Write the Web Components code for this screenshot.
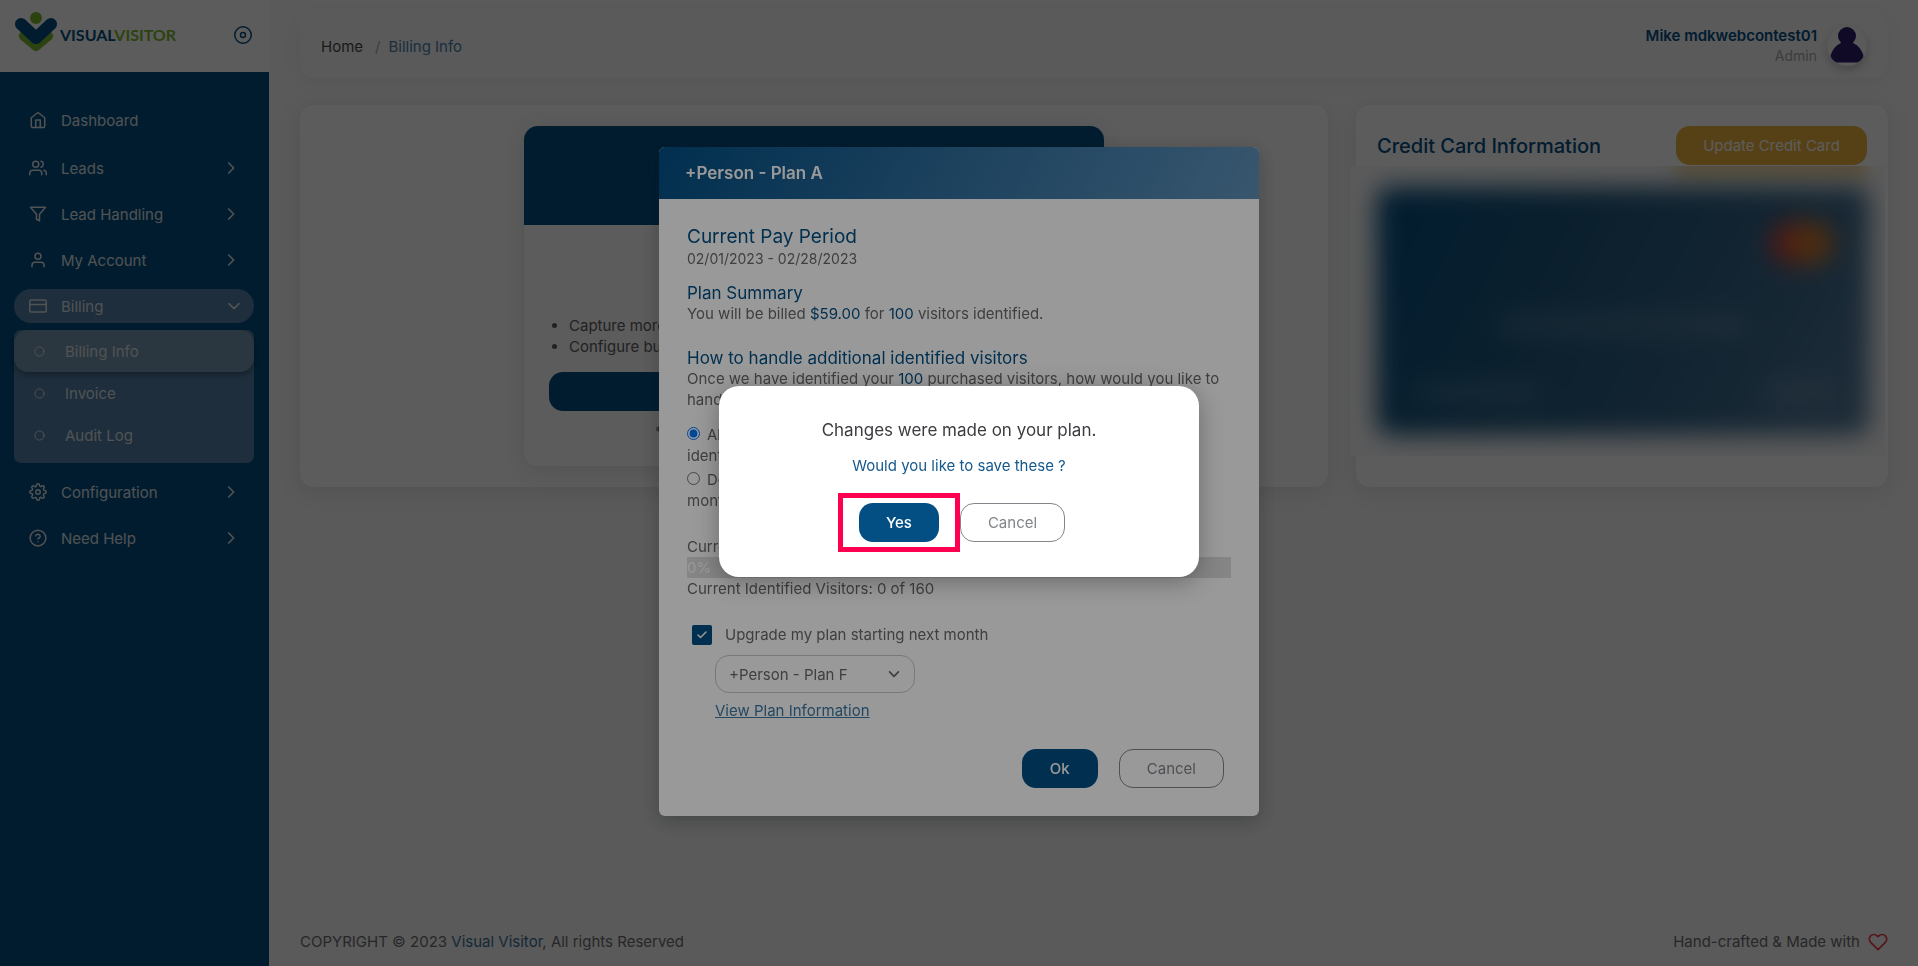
<!DOCTYPE html>
<html lang="en">
<head>
<meta charset="utf-8">
<title>Billing Info - Visual Visitor</title>
<style>
  :root {
    --navy: #034f84;
    --text: #6e6e72;
    --page: #f8f8f8;
  }
  body {
    margin: 0;
    background: var(--page);
    color: var(--text);
    font: 400 15px/21px Inter, "Open Sans", sans-serif;
  }
</style>
</head>
<body>
<vv-app></vv-app>

<vv-overlay>
  <vv-plan-modal heading="+Person - Plan A"></vv-plan-modal>
</vv-overlay>

<vv-overlay>
  <vv-confirm>
    <span slot="title">Changes were made on your plan.</span>
    <span slot="question">Would you like to save these ?</span>
  </vv-confirm>
</vv-overlay>

<script>
const define = (name, html, setup) => {
  const template = document.createElement('template');
  template.innerHTML = html;
  customElements.define(name, class extends HTMLElement {
    connectedCallback() {
      if (this.shadowRoot) return;
      const root = this.attachShadow({ mode: 'open' });
      const content = template.content.cloneNode(true);
      if (setup) setup(this, content);
      root.append(content);
    }
  });
};

const ICONS = {
  home: '<path d="M3 9l9-7 9 7v11a2 2 0 0 1-2 2H5a2 2 0 0 1-2-2z"/><path d="M9 22V12h6v10"/>',
  users: '<path d="M17 21v-2a4 4 0 0 0-4-4H5a4 4 0 0 0-4 4v2"/><circle cx="9" cy="7" r="4"/><path d="M23 21v-2a4 4 0 0 0-3-3.87M16 3.13a4 4 0 0 1 0 7.75"/>',
  filter: '<path d="M22 3H2l8 9.46V19l4 2v-8.54z"/>',
  user: '<path d="M20 21v-2a4 4 0 0 0-4-4H8a4 4 0 0 0-4 4v2"/><circle cx="12" cy="7" r="4"/>',
  card: '<rect x="1" y="4" width="22" height="16" rx="2"/><path d="M1 10h22"/>',
  gear: '<circle cx="12" cy="12" r="3"/><path d="M19.4 15a1.65 1.65 0 0 0 .33 1.82l.06.06a2 2 0 1 1-2.83 2.83l-.06-.06a1.65 1.65 0 0 0-2.8 1.17V21a2 2 0 1 1-4 0v-.09A1.65 1.65 0 0 0 9 19.4a1.65 1.65 0 0 0-1.82.33l-.06.06a2 2 0 1 1-2.83-2.83l.06-.06A1.65 1.65 0 0 0 3.09 14H3a2 2 0 1 1 0-4h.09A1.65 1.65 0 0 0 4.6 9a1.65 1.65 0 0 0-.33-1.82l-.06-.06a2 2 0 1 1 2.83-2.83l.06.06A1.65 1.65 0 0 0 9 4.68 1.65 1.65 0 0 0 10 3.17V3a2 2 0 1 1 4 0v.09a1.65 1.65 0 0 0 2.82 1.17l.06-.06a2 2 0 1 1 2.83 2.83l-.06.06A1.65 1.65 0 0 0 19.4 9a1.65 1.65 0 0 0 1.51 1H21a2 2 0 1 1 0 4h-.09a1.65 1.65 0 0 0-1.51 1z"/>',
  help: '<circle cx="12" cy="12" r="10.5"/><path d="M9.09 9a3 3 0 0 1 5.83 1c0 2-3 3-3 3M12 17h.01"/>',
  ring: '<circle cx="12" cy="12" r="10"/>',
  disc: '<circle cx="12" cy="12" r="11"/><circle cx="12" cy="12" r="3.3"/>',
  right: '<path d="M8.5 4.5l7.5 7.5-7.5 7.5"/>',
  down: '<path d="M4.5 8.5l7.5 7.5 7.5-7.5"/>',
  check: '<path d="M20 6L9 17l-5-5"/>',
  heart: '<path d="M20.84 4.61a5.5 5.5 0 0 0-7.78 0L12 5.67l-1.06-1.06a5.5 5.5 0 0 0-7.78 7.78L12 21.23l8.84-8.84a5.5 5.5 0 0 0 0-7.78z"/>'
};

define('vv-icon', `
  <style>
    :host { display: inline-flex; flex: none; width: 18px; height: 18px; }
    svg { width: 100%; height: 100%; fill: none; stroke: currentColor; stroke-width: var(--stroke, 2); stroke-linecap: round; stroke-linejoin: round; overflow: visible; }
  </style>
  <svg viewBox="0 0 24 24" aria-hidden="true"></svg>`,
  (host, root) => { root.querySelector('svg').innerHTML = ICONS[host.getAttribute('name')] || ''; });

define('vv-button', `
  <style>
    :host { display: inline-flex; }
    button {
      box-sizing: border-box; height: 39px; min-width: 76px; width: 100%; padding: 0 26px; border: 1px solid transparent;
      border-radius: 14px; font: inherit; font-weight: 500; white-space: nowrap; cursor: pointer;
      background: var(--navy); color: #fff;
    }
    :host([variant="outline"]) button { padding: 0 27px; background: transparent; color: #82868b; border-color: #82868b; font-weight: 400; }
    :host([variant="gold"]) button { background: #efb43d; font-weight: 400; }
  </style>
  <button type="button"><slot></slot></button>`);

define('vv-nav-item', `
  <style>
    :host { display: block; }
    a {
      display: flex; align-items: center; height: 34px; padding: 0 15px; border-radius: 17px;
      color: #dfe3e6; text-decoration: none;
    }
    :host([open]) a { background: #5380a7; }
    .label { flex: 1; padding-left: 14px; }
    .arrow { width: 16px; height: 16px; --stroke: 2.5; }
    :host([open]) .arrow { margin-right: -3px; }
    :host([sub]) a { height: 42px; padding-left: 20px; border-radius: 14px; }
    :host([sub]) .label { padding-left: 20px; }
    :host([sub]) .lead { width: 11px; height: 11px; }
    :host([active]) a { background: #7799b2; box-shadow: 0 3px 6px rgba(0, 0, 0, .3); }
  </style>
  <a href="#"><vv-icon class="lead"></vv-icon><span class="label"><slot></slot></span></a>`,
  (host, root) => {
    root.querySelector('.lead').setAttribute('name', host.getAttribute('icon') || 'ring');
    if (host.hasAttribute('expandable')) {
      const arrow = document.createElement('vv-icon');
      arrow.className = 'arrow';
      arrow.setAttribute('name', host.hasAttribute('open') ? 'down' : 'right');
      root.querySelector('a').append(arrow);
    }
  });

define('vv-logo', `
  <style>
    :host { display: flex; align-items: center; gap: 3px; }
    svg { width: 42px; height: 40px; }
    b { font: 700 16px/20px Lato, sans-serif; color: var(--navy); padding-top: 5px; }
    i { font-style: normal; color: #7ab82e; }
  </style>
  <svg viewBox="0 0 42 40" aria-hidden="true">
    <path d="M9 24l12 10 12-10" fill="none" stroke="#7ab82e" stroke-width="10" stroke-linecap="round" stroke-linejoin="round"/>
    <path d="M6 12l15 14 15-14" fill="none" stroke="#034f84" stroke-width="12" stroke-linecap="round" stroke-linejoin="round"/>
    <circle cx="21" cy="6" r="6" fill="#7ab82e"/>
  </svg>
  <b>VISUAL<i>VISITOR</i></b>`);

define('vv-sidebar', `
  <style>
    :host { display: flex; flex-direction: column; width: 269px; flex: none; background: var(--navy); }
    header {
      display: flex; justify-content: space-between; align-items: center; box-sizing: border-box;
      height: 72px; padding: 0 17px 8px 15px; background: #fff; color: var(--navy);
    }
    header button { padding: 6px 0 0; border: 0; background: none; color: inherit; display: flex; }
    nav { display: flex; flex-direction: column; gap: 12px; padding: 31px 15px 24px 14px; }
    .first { margin-bottom: 2px; }
    .sub { margin-top: -5px; padding-bottom: 7px; border-radius: 7px; background: #5380a7; }
  </style>
  <header>
    <vv-logo></vv-logo>
    <button type="button" aria-label="Collapse menu"><vv-icon name="disc"></vv-icon></button>
  </header>
  <nav>
    <vv-nav-item icon="home" class="first">Dashboard</vv-nav-item>
    <vv-nav-item icon="users" expandable>Leads</vv-nav-item>
    <vv-nav-item icon="filter" expandable>Lead Handling</vv-nav-item>
    <vv-nav-item icon="user" expandable>My Account</vv-nav-item>
    <vv-nav-item icon="card" expandable open>Billing</vv-nav-item>
    <div class="sub">
      <vv-nav-item sub active>Billing Info</vv-nav-item>
      <vv-nav-item sub>Invoice</vv-nav-item>
      <vv-nav-item sub>Audit Log</vv-nav-item>
    </div>
    <vv-nav-item icon="gear" expandable>Configuration</vv-nav-item>
    <vv-nav-item icon="help" expandable>Need Help</vv-nav-item>
  </nav>`);

define('vv-topbar', `
  <style>
    :host {
      display: flex; justify-content: space-between; align-items: center; height: 64px;
      padding: 0 21px; border-radius: 14px; box-shadow: 0 4px 20px rgba(34, 41, 47, .05);
    }
    .crumbs { display: flex; gap: 8px; }
    .crumbs a { color: #4a4a4a; text-decoration: none; }
    .crumbs .sep { color: #aaa; padding-left: 4px; }
    .crumbs .here { color: #4b82ad; }
    .user { display: flex; align-items: center; gap: 10px; text-align: right; }
    .name { color: var(--navy); font-weight: 600; line-height: 20px; }
    .role { font-size: 14px; line-height: 20px; color: #a8a8aa; }
    svg { width: 40px; height: 40px; border-radius: 50%; background: var(--page); box-shadow: 0 4px 8px rgba(0, 0, 0, .2); }
  </style>
  <div class="crumbs"><a href="#">Home</a><span class="sep">/</span><span class="here">Billing Info</span></div>
  <div class="user">
    <div><div class="name">Mike mdkwebcontest01</div><div class="role">Admin</div></div>
    <svg viewBox="0 0 40 40" role="img" aria-label="Profile picture">
      <circle cx="20" cy="10" r="9" fill="#2f1c6a"/>
      <path d="M14 17h12c5 2 9 7 10.500 13-.5 3-3 5-6 6.500h-21c-3-1.500-5.500-3.500-6-6.500C5 24 9 19 14 17z" fill="#2f1c6a"/>
    </svg>
  </div>`);

define('vv-panel', `
  <style>
    :host { display: block; padding: 21px; border-radius: 14px; background: #fff; box-shadow: 0 4px 24px rgba(34, 41, 47, .1); }
  </style>
  <slot></slot>`);

define('vv-plan-card', `
  <style>
    :host { display: block; width: 580px; max-width: 100%; margin: 0 auto; border-radius: 14px; background: #fff; overflow: hidden; box-shadow: 0 4px 24px rgba(34, 41, 47, .15); }
    .head { height: 99px; background: var(--navy); }
    .body { padding: 90px 25px 24px; }
    ul { margin: 0 0 15px; padding-left: 20px; }
    vv-button { display: flex; }
    p { margin: 10px 0 0; padding-left: 106px; }
    li, p { color: #5c5c60; }
  </style>
  <div class="head"></div>
  <div class="body">
    <ul><li>Capture more</li><li>Configure bulk</li></ul>
    <vv-button></vv-button>
    <p>*</p>
  </div>`);

define('vv-payment-card', `
  <style>
    :host { display: block; }
    header { display: flex; align-items: center; justify-content: space-between; }
    h2 { margin: 0; font-size: 20px; line-height: 24px; font-weight: 500; color: var(--navy); }
    .veil { margin: 1px -18px 10px -26px; padding: 21px 16px 21px 26px; overflow: hidden; position: relative; background: #fafafa; }
    .glow { position: absolute; top: -16px; right: 18px; width: 191px; height: 32px; background: #efb43d; opacity: .4; filter: blur(8px); }
    .card { box-sizing: border-box; height: 248px; padding: 32px 34px; border-radius: 14px; filter: blur(12px);
      display: flex; flex-direction: column; justify-content: space-between;
      background: linear-gradient(118deg, #034f84, #1f587f 35%, #34658a 65%, #537b9c); }
    .brand { align-self: flex-end; width: 66px; height: 48px; }
    .bar { height: 20px; border-radius: 10px; background: rgba(255, 255, 255, .15); }
    .number { width: 250px; align-self: center; }
    .foot { display: flex; justify-content: space-between; }
    .holder { width: 130px; }
    .date { width: 70px; }
    vv-button { width: 191px; }
  </style>
  <header><h2>Credit Card Information</h2><vv-button variant="gold">Update Credit Card</vv-button></header>
  <div class="veil">
    <div class="glow"></div>
    <div class="card">
      <svg class="brand" viewBox="0 0 60 44" aria-hidden="true"><circle cx="21" cy="22" r="20" fill="#e0433a"/><circle cx="39" cy="22" r="20" fill="#d87a2a"/></svg>
      <div class="bar number"></div>
      <div class="foot"><div class="bar holder"></div><div class="bar date"></div></div>
    </div>
  </div>`);

define('vv-footer', `
  <style>
    :host { display: flex; justify-content: space-between; align-items: center; }
    a { color: #3d709a; text-decoration: none; }
    .made { display: flex; align-items: center; gap: 8px; }
    vv-icon { width: 20px; height: 20px; color: #ea3a46; }
  </style>
  <span>COPYRIGHT © 2023 <a href="#">Visual Visitor</a>, All rights Reserved</span>
  <span class="made">Hand-crafted &amp; Made with <vv-icon name="heart"></vv-icon></span>`);

define('vv-app', `
  <style>
    :host { display: flex; min-height: 100vh; }
    main { flex: 1; display: flex; flex-direction: column; padding: 14px 30px 14px 31px; min-width: 0; }
    .panels { display: grid; grid-template-columns: 257fr 133fr; gap: 28px; margin-top: 27px; }
    vv-footer { margin-top: auto; }
  </style>
  <vv-sidebar></vv-sidebar>
  <main>
    <vv-topbar></vv-topbar>
    <div class="panels">
      <vv-panel><vv-plan-card></vv-plan-card></vv-panel>
      <vv-panel><vv-payment-card></vv-payment-card></vv-panel>
    </div>
    <vv-footer></vv-footer>
  </main>`);

define('vv-overlay', `
  <style>
    :host { position: fixed; inset: 0; display: flex; align-items: center; justify-content: center; padding-bottom: 3px; background: rgba(0, 0, 0, .4); }
  </style>
  <slot></slot>`);

define('vv-plan-modal', `
  <style>
    :host { display: block; width: 600px; max-width: 100%; border-radius: 6px; background: #fff; overflow: hidden; box-shadow: 0 5px 20px rgba(34, 41, 47, .3); color: #6a6a6e; }
    header { padding: 14px 26px; font-size: 17px; line-height: 24px; font-weight: 600; color: #fff;
      background: linear-gradient(118deg, #034f84, #5f90b8); }
    form { padding: 27px 28px 28px; }
    h3, h4, p { margin: 0; font-weight: 400; }
    h3, h4, b { color: var(--navy); font-weight: 400; }
    h3 { font-size: 19px; line-height: 22px; }
    h4 { font-size: 17px; line-height: 19px; margin-top: 25px; }
    .dates { font-size: 14px; }
    .first { margin-top: 15px; }
    .choice { display: block; margin-top: 3px; }
    .choice:first-of-type { margin-top: 14px; }
    .choice input { width: 13px; height: 13px; margin: 0 7px 0 0; }
    .usage { margin-top: 25px; }
    .meter { background: #dedede; color: #fff; }
    .upgrade { display: flex; align-items: center; gap: 13px; margin: 25px 0 10px 5px; }
    .tick { position: relative; display: flex; width: 20px; height: 20px; }
    .tick input { appearance: none; width: 20px; height: 20px; margin: 0; border-radius: 2px; background: var(--navy); }
    .tick vv-icon { position: absolute; inset: 4px; width: 12px; height: 12px; color: #fff; --stroke: 3; }
    .picker { position: relative; display: block; width: 200px; margin-left: 28px; }
    select { appearance: none; width: 100%; height: 38px; padding: 0 13px; border: 1px solid #c8c8cc; border-radius: 14px; background: transparent; color: inherit; font: inherit; display: block; }
    .picker vv-icon { position: absolute; right: 14px; top: 12px; width: 14px; height: 14px; --stroke: 3; }
    .more { display: block; width: fit-content; margin: 7px 0 28px 28px; color: #3d78a3; text-decoration: underline; }
    footer { display: flex; justify-content: flex-end; gap: 21px; padding-right: 7px; }
  </style>
  <header></header>
  <form>
    <h3>Current Pay Period</h3>
    <p class="dates">02/01/2023 - 02/28/2023</p>
    <h4 class="first">Plan Summary</h4>
    <p>You will be billed <b>$59.00</b> for <b>100</b> visitors identified.</p>
    <h4>How to handle additional identified visitors</h4>
    <p>Once we have identified your <b>100</b> purchased visitors, how would you like to<br>handle them?</p>
    <label class="choice"><input type="radio" name="extra" checked>Allow more<br>identified</label>
    <label class="choice"><input type="radio" name="extra">Do not allow<br>monthly</label>
    <p class="usage">Current Usage</p>
    <p class="meter">0%</p>
    <p>Current Identified Visitors: 0 of 160</p>
    <div class="upgrade">
      <span class="tick"><input type="checkbox" id="upgrade" checked><vv-icon name="check"></vv-icon></span>
      <label for="upgrade">Upgrade my plan starting next month</label>
    </div>
    <span class="picker">
      <select aria-label="Next plan"><option>+Person - Plan F</option></select>
      <vv-icon name="down"></vv-icon>
    </span>
    <a class="more" href="#">View Plan Information</a>
    <footer><vv-button>Ok</vv-button><vv-button variant="outline">Cancel</vv-button></footer>
  </form>`,
  (host, root) => { root.querySelector('header').textContent = host.getAttribute('heading'); });

define('vv-confirm', `
  <style>
    :host { display: flex; flex-direction: column; align-items: center; box-sizing: border-box; width: 480px; max-width: 100%; padding: 32px 20px 35px; border-radius: 20px; background: #fff; box-shadow: 0 5px 25px rgba(0, 0, 0, .3); }
    .title { color: #3c3c40; font-size: 17px; line-height: 24px; }
    .question { color: #15598c; line-height: 24px; margin-top: 12px; }
    .actions { display: flex; gap: 21px; margin-top: 25px; padding-left: 6px; }
    .yes { position: relative; display: flex; }
    .mark { position: absolute; inset: -10px -21px; border: 5px solid #ff0050; pointer-events: none; }
  </style>
  <div class="title"><slot name="title"></slot></div>
  <div class="question"><slot name="question"></slot></div>
  <div class="actions">
    <div class="yes"><vv-button>Yes</vv-button><div class="mark"></div></div>
    <vv-button variant="outline">Cancel</vv-button>
  </div>`);
</script>
</body>
</html>
